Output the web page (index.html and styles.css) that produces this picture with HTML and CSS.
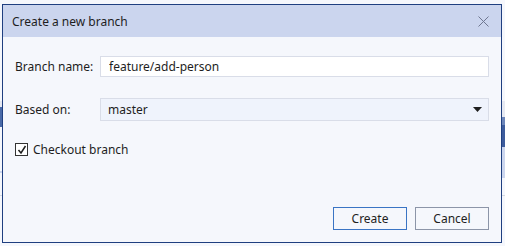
FILE: index.html
```html
<!DOCTYPE html>
<html lang="en">
<head>
  <meta charset="UTF-8" />
  <title>Create a new branch</title>
  <link rel="stylesheet" href="styles.css">
</head>
<body>
  <div class="backdrop">
    <div class="side-left"></div>
    <div class="side-right"></div>
  </div>
  <div class="dialog">
    <div class="title-bar">
      <span class="title">Create a new branch</span>
      <svg class="close" width="11" height="11" viewBox="0 0 11 11">
        <path d="M0.5 0.5 L10.5 10.5 M10.5 0.5 L0.5 10.5" stroke="#6f7790" stroke-width="1" fill="none"/>
      </svg>
    </div>
    <div class="content">
      <div class="row row-name">
        <label for="branch">Branch name:</label>
        <input type="text" id="branch" value="feature/add-person" />
      </div>
      <div class="row row-base">
        <label>Based on:</label>
        <div class="select">
          <span>master</span>
          <svg width="9" height="5" viewBox="0 0 9 5"><path d="M0 0 H9 L4.5 5 Z" fill="#1e1e1e"/></svg>
        </div>
      </div>
      <div class="check-row">
        <span class="checkbox">
          <svg width="10" height="10" viewBox="0 0 10 10"><path d="M1.5 5 L4 8 L8.5 1" stroke="#1e1e1e" stroke-width="1.5" fill="none"/></svg>
        </span>
        <span>Checkout branch</span>
      </div>
      <div class="buttons">
        <button class="btn btn-primary">Create</button>
        <button class="btn">Cancel</button>
      </div>
    </div>
  </div>
</body>
</html>
```
FILE: styles.css
```css
body {
  margin: 0;
  width: 505px;
  height: 246px;
  background: #f5f7fc;
  font-family: 'Noto Sans', 'Open Sans', sans-serif;
  font-size: 12px;
  color: #1e1e1e;
  position: relative;
  overflow: hidden;
}
.backdrop .side-left {
  position: absolute;
  left: 0;
  top: 101px;
  width: 2px;
  height: 95px;
  background: linear-gradient(#e6e9f2 0 6px, #4a6aa8 6px 26px, #f5f7fc 26px 70px, #ccd6ee 70px 72px, #f5f7fc 72px 94px, #d5d9e2 94px);
}
.backdrop .side-right {
  position: absolute;
  left: 502px;
  top: 101px;
  width: 3px;
  height: 95px;
  background: linear-gradient(#e6e9f2 0 16px, #6c85b9 16px 24px, #3d5c9c 24px 46px, #ccd6ee 46px 77px, #f5f7fc 77px 94px, #d5d9e2 94px);
}
.dialog {
  position: absolute;
  left: 2px;
  top: 4px;
  width: 498px;
  height: 237px;
  border: 1px solid #1f3f80;
  background: #f5f7fc;
  display: flex;
  flex-direction: column;
}
.title-bar {
  height: 32px;
  background: #cbd5ee;
  display: flex;
  align-items: center;
  justify-content: space-between;
  padding: 0 12px 0 9px;
}
.title {
  font-size: 12px;
}
.content {
  flex: 1;
  padding: 19px 12px 12px 12px;
  display: flex;
  flex-direction: column;
}
.row {
  display: grid;
  grid-template-columns: 85px 1fr;
  align-items: center;
}
.row label {
  font-size: 12px;
}
.row input {
  height: 21px;
  box-sizing: border-box;
  border: 1px solid #d9dde8;
  background: #ffffff;
  padding: 0 8px;
  font-family: inherit;
  font-size: 12px;
  color: #1e1e1e;
  outline: none;
}
.row-base {
  margin-top: 21px;
}
.select {
  height: 23px;
  box-sizing: border-box;
  border: 1px solid #d9dde8;
  background: #eff3fc;
  padding: 0 6px 0 7px;
  display: flex;
  align-items: center;
  justify-content: space-between;
}
.check-row {
  margin-top: 20px;
  display: flex;
  align-items: center;
  gap: 5px;
}
.checkbox {
  width: 13px;
  height: 13px;
  box-sizing: border-box;
  border: 1px solid #333333;
  background: #ffffff;
  display: flex;
  align-items: center;
  justify-content: center;
}
.buttons {
  margin-top: auto;
  display: flex;
  justify-content: flex-end;
  gap: 8px;
}
.btn {
  width: 74px;
  height: 23px;
  border: 1px solid #8c95a8;
  background: #f5f7fc;
  font-family: inherit;
  font-size: 12px;
  color: #1e1e1e;
  padding: 0;
}
.btn-primary {
  border-color: #3a74c4;
}
```
